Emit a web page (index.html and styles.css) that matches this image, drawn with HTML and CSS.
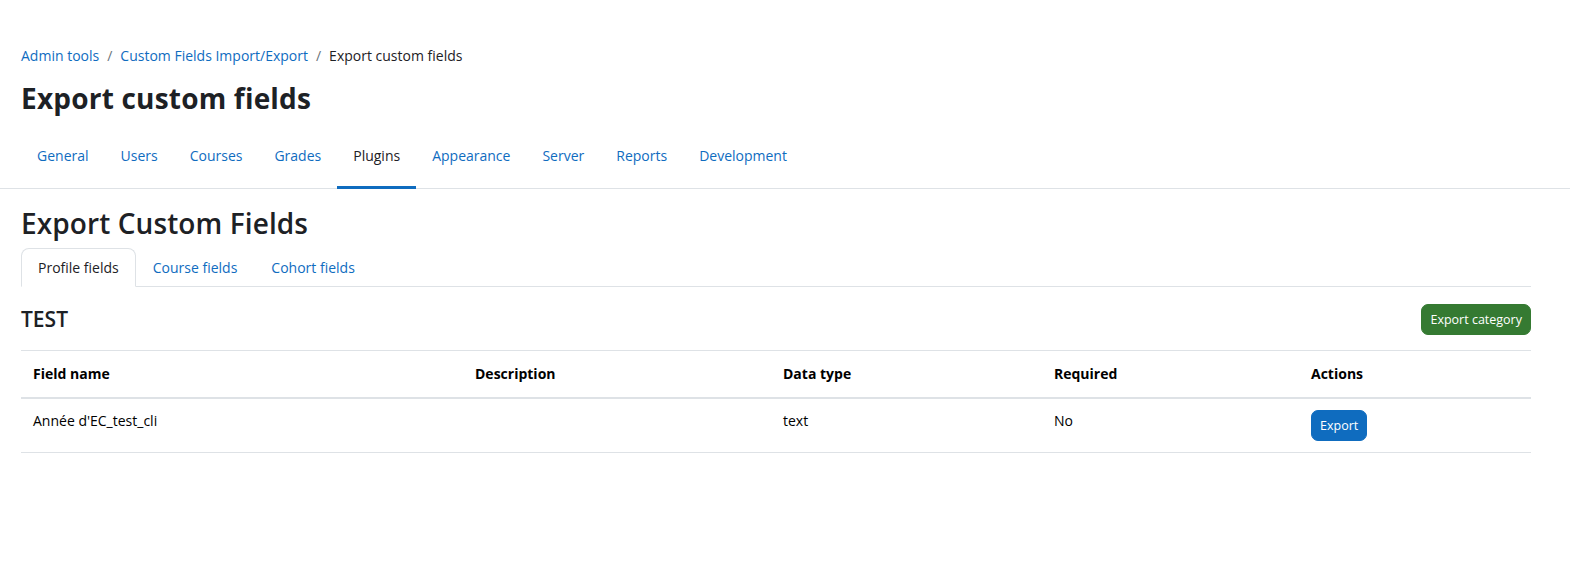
FILE: index.html
```html
<!DOCTYPE html>
<html lang="en">
<head>
<meta charset="utf-8">
<title>Export custom fields</title>
<link rel="stylesheet" href="styles.css">
</head>
<body>
<div class="page">
  <header class="page-header">
    <nav class="breadcrumb">
      <a href="#">Admin tools</a><span class="sep">/</span><a href="#">Custom Fields Import/Export</a><span class="sep">/</span><span class="current">Export custom fields</span>
    </nav>
    <h1 class="page-title">Export custom fields</h1>
  </header>
  <nav class="secondary-nav">
    <ul class="nav-list">
      <li><a href="#">General</a></li>
      <li><a href="#">Users</a></li>
      <li><a href="#">Courses</a></li>
      <li><a href="#">Grades</a></li>
      <li><a href="#" class="active">Plugins</a></li>
      <li><a href="#">Appearance</a></li>
      <li><a href="#">Server</a></li>
      <li><a href="#">Reports</a></li>
      <li><a href="#">Development</a></li>
    </ul>
  </nav>
  <main class="content">
    <h2 class="section-title">Export Custom Fields</h2>
    <ul class="tabs">
      <li><a href="#" class="tab active">Profile fields</a></li>
      <li><a href="#" class="tab">Course fields</a></li>
      <li><a href="#" class="tab">Cohort fields</a></li>
    </ul>
    <div class="category-head">
      <h3 class="category-title">TEST</h3>
      <button class="btn btn-success">Export category</button>
    </div>
    <table class="fields-table">
      <colgroup>
        <col class="c1"><col class="c2"><col class="c3"><col class="c4"><col class="c5">
      </colgroup>
      <thead>
        <tr><th>Field name</th><th>Description</th><th>Data type</th><th>Required</th><th>Actions</th></tr>
      </thead>
      <tbody>
        <tr><td>Année d'EC_test_cli</td><td></td><td>text</td><td>No</td><td><button class="btn btn-primary">Export</button></td></tr>
      </tbody>
    </table>
  </main>
</div>
</body>
</html>
```

FILE: styles.css
```css
* { box-sizing: border-box; }
html, body { margin: 0; padding: 0; background: #fff; }
body {
  font-family: "Open Sans", "Noto Sans", sans-serif;
  font-size: 14px;
  line-height: 22.5px;
  color: #1d2125;
}
a { color: #0f6cbf; text-decoration: none; }
.page { width: 1570px; }
.page-header { padding: 45px 21px 0; }
.breadcrumb { display: flex; align-items: center; }
.breadcrumb .sep { padding: 0 8px; color: #6a737b; }
.breadcrumb .current { color: #1d2125; }
.page-title {
  margin: 14px 0 0;
  font-size: 28px;
  line-height: 33.6px;
  font-weight: 700;
  letter-spacing: 0.2px;
}
.secondary-nav {
  margin-top: 11px;
  border-bottom: 1px solid #dee2e6;
  padding: 0 21px;
}
.nav-list { list-style: none; margin: 0; padding: 0; display: flex; }
.nav-list a {
  display: block;
  padding: 19px 16px 18px;
  border-bottom: 3px solid transparent;
  margin-bottom: -1px;
}
.nav-list a.active { color: #1d2125; border-bottom-color: #0f6cbf; }
.content { padding: 0 39px 0 21px; }
.section-title {
  margin: 18px 0 8px;
  font-size: 28px;
  line-height: 33.6px;
  font-weight: 600;
  letter-spacing: 0.1px;
}
.tabs {
  list-style: none; margin: 0; padding: 0;
  display: flex;
  border-bottom: 1px solid #dee2e6;
}
.tab {
  display: block;
  padding: 7.5px 16px 7px;
  border: 1px solid transparent;
  border-radius: 8px 8px 0 0;
  margin-bottom: -1px;
}
.tab.active {
  color: #1d2125;
  background: #fff;
  border-color: #dee2e6 #dee2e6 #fff;
}
.category-head {
  margin-top: 17px;
  display: flex;
  justify-content: space-between;
  align-items: center;
}
.category-title { margin: 0; font-size: 21px; font-weight: 600; line-height: 25px; }
.btn {
  font-family: inherit;
  font-size: 12.5px;
  line-height: 21px;
  padding: 4px 8px;
  border: 1px solid transparent;
  border-radius: 7px;
  color: #fff;
  cursor: pointer;
}
.btn-success { background: #357a32; border-color: #357a32; }
.btn-primary { background: #0f6cbf; border-color: #0f6cbf; }
.fields-table {
  margin-top: 15px;
  width: 1510px;
  border-collapse: collapse;
  table-layout: fixed;
}
.c1 { width: 442px; }
.c2 { width: 308px; }
.c3 { width: 271px; }
.c4 { width: 257px; }
.c5 { width: 232px; }
.fields-table th, .fields-table td {
  text-align: left;
  padding: 12px;
  vertical-align: top;
  border-top: 1px solid #dee2e6;
}
.fields-table th { padding: 11.5px 12px; font-weight: 700; color: #000; border-bottom: 2px solid #dee2e6; }
.fields-table td { padding: 11.5px 12px 10.5px; color: #000; border-bottom: 1px solid #dee2e6; }
.fields-table td .btn { vertical-align: top; }
```
